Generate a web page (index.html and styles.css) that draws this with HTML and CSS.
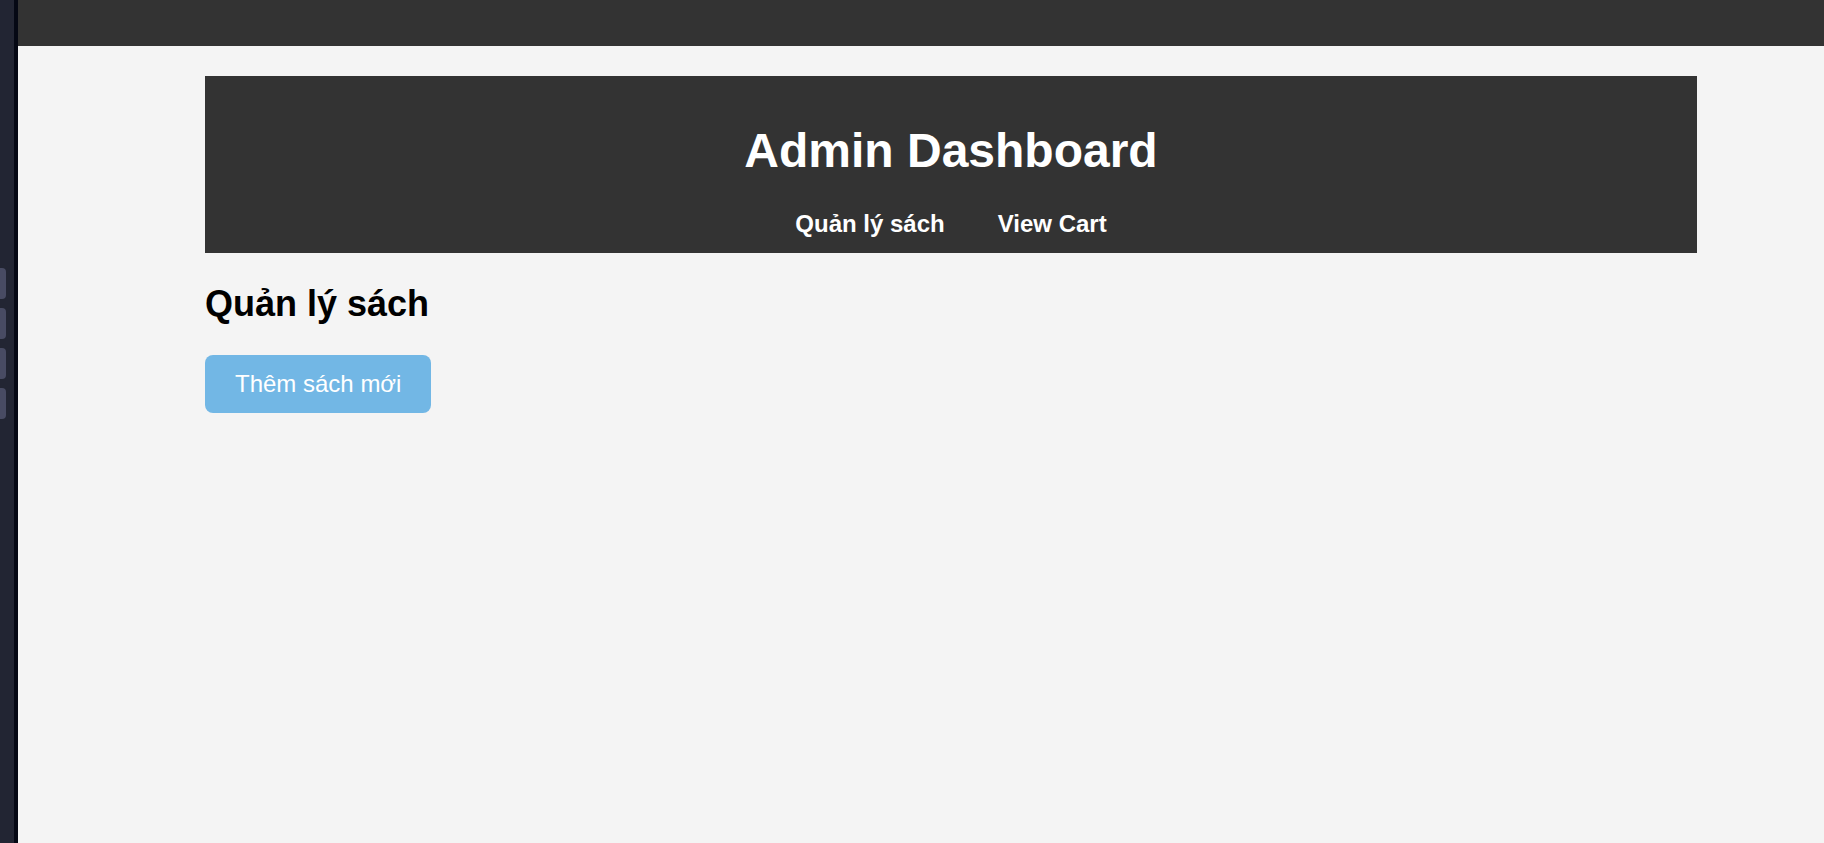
FILE: index.html
```html
<!DOCTYPE html>
<html lang="vi">
<head>
<meta charset="utf-8">
<title>Admin Dashboard</title>
<link rel="stylesheet" href="styles.css">
</head>
<body>
<div class="shell">
  <aside class="dock">
    <span class="dock-tab"></span>
    <span class="dock-tab"></span>
    <span class="dock-tab"></span>
    <span class="dock-tab"></span>
  </aside>
  <div class="page">
    <div class="topbar"></div>
    <div class="container">
      <header class="header">
        <h1 class="title">Admin Dashboard</h1>
        <nav class="nav">
          <a class="nav-link" href="#">Quản lý sách</a>
          <a class="nav-link" href="#">View Cart</a>
        </nav>
      </header>
      <h2 class="section-title">Quản lý sách</h2>
      <button class="btn-add" type="button">Thêm sách mới</button>
    </div>
  </div>
</div>
</body>
</html>
```
FILE: styles.css
```css
html, body {
  margin: 0;
  padding: 0;
  height: 100%;
}
body {
  font-family: "Liberation Sans", Arial, sans-serif;
  background: #f4f4f4;
  overflow: hidden;
}
.shell {
  display: flex;
  height: 843px;
}
.dock {
  width: 14px;
  flex: 0 0 14px;
  background: #222533;
  border-right: 4px solid #050814;
  display: flex;
  flex-direction: column;
  align-items: flex-start;
  gap: 9px;
  padding-top: 268px;
  box-sizing: content-box;
}
.dock-tab {
  display: block;
  width: 6px;
  height: 31px;
  background: #484b63;
  border-radius: 0 4px 4px 0;
}
.page {
  flex: 1;
  display: flex;
  flex-direction: column;
  background: #f4f4f4;
}
.topbar {
  height: 46px;
  background: #333333;
}
.container {
  margin-left: 187px;
  width: 1492px;
  padding-top: 30px;
}
.header {
  background: #333333;
  color: #ffffff;
  padding: 15px;
  text-align: center;
}
.title {
  font-size: 48px;
  font-weight: bold;
  margin: 32px 0;
  line-height: normal;
}
.nav {
  display: flex;
  justify-content: center;
  gap: 53px;
  font-size: 24px;
  line-height: normal;
}
.nav-link {
  color: #ffffff;
  font-weight: bold;
  text-decoration: none;
}
.section-title {
  font-size: 36px;
  font-weight: bold;
  margin: 30px 0;
  color: #000000;
  line-height: normal;
}
.btn-add {
  font-family: "Liberation Sans", Arial, sans-serif;
  font-size: 24px;
  line-height: normal;
  color: #ffffff;
  background: #72b7e5;
  border: none;
  border-radius: 8px;
  padding: 15px 30px;
  cursor: pointer;
}
```
